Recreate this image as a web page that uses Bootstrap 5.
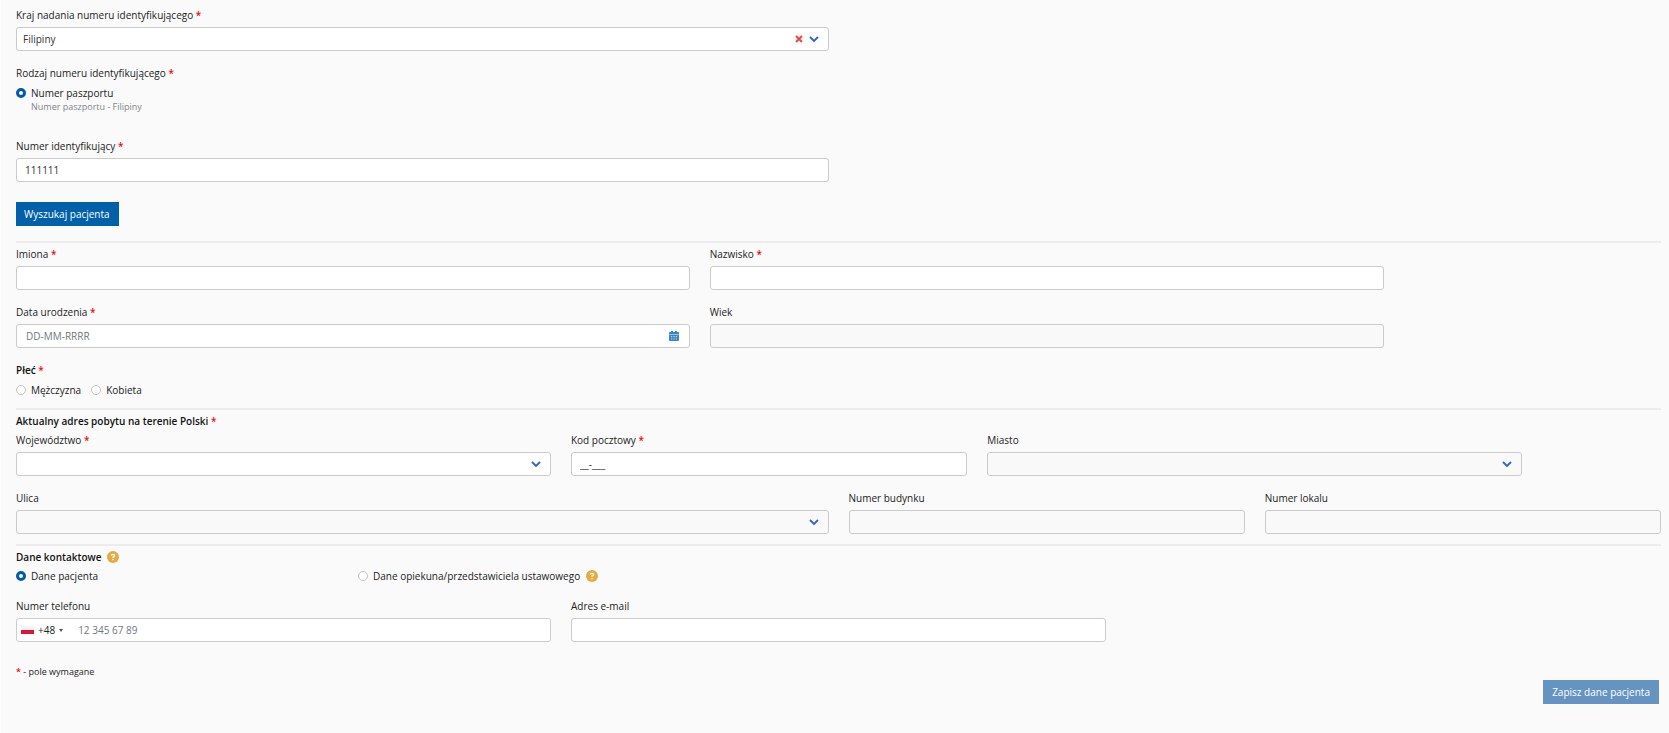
<!DOCTYPE html>
<html lang="pl">
<head>
<meta charset="utf-8">
<meta name="viewport" content="width=device-width, initial-scale=1">
<title>Dane pacjenta</title>
<link href="https://cdn.jsdelivr.net/npm/bootstrap@5.3.0/dist/css/bootstrap.min.css" rel="stylesheet">
<style>
:root{--line:#cbcbcb;--blue:#0060a8}
body{font-family:"Open Sans","Noto Sans",sans-serif;font-size:10px;line-height:16px;color:#222;background:#fafafa;border-left:1px solid #fff;min-height:100vh}
.patient-form{padding:7px 8px 16px 15px}
.patient-form .row{--bs-gutter-x:20px}
.form-label{display:block;margin-bottom:4px;line-height:16px}
.req{color:#f00;font-weight:600}
.form-control,.form-select{height:24px;min-height:24px;padding:0 8px;font-size:10px;line-height:16px;color:#333;border:1px solid var(--line);border-radius:3px;background-color:#fff}
.form-select{padding:0 32px 0 6px;background-image:url("data:image/svg+xml,%3Csvg xmlns='http://www.w3.org/2000/svg' viewBox='0 0 10 10'%3E%3Cpath d='M1 3l4 4 4-4' fill='none' stroke='%232f62cc' stroke-width='1.8'/%3E%3C/svg%3E");background-size:10px 10px;background-position:right 9px center}
.form-control:disabled,.form-select:disabled{background-color:#f9f9f9;opacity:1}
.form-control::placeholder{color:#70777d;opacity:1}
.date-input{padding-left:9px}
.field-icon{position:absolute;top:0;height:24px;border:0;background:none;padding:0;display:flex;align-items:center}
.clear-btn{right:26px}
.cal-btn{right:11px}
.choice{display:flex;align-items:center;gap:5px;line-height:16px}
.choice input{appearance:none;width:10px;height:10px;margin:0;border:1px solid #c4c4c4;border-radius:50%;background:#fff;flex:none}
.choice input:checked{border:3px solid #0059b3}
.hint{font-size:9px;line-height:12px;color:#808689;padding-left:15px;margin-bottom:25px}
.btn-app{font-size:10px;line-height:16px;padding:3px 8px;border:1px solid var(--blue);border-radius:0;color:#fff;background:var(--blue);font-weight:500}
.btn-app:hover{background:#004f8c;color:#fff}
.btn-app:disabled{background:#6594c2;border-color:#6594c2;color:#fff;opacity:1}
.search-btn{margin:20px 0 15px;padding-left:7px}
.divider{height:2px;margin:0 0 3px;border:0;background:#ececec;opacity:1}
.section-title{font-size:10px;line-height:16px;font-weight:600;color:#111;margin:0}
.title-row{margin-bottom:3px}
.help{display:inline-flex;border:0;padding:0;background:none}
.group-gap{margin-bottom:14px}
.sex-row{gap:10px;padding-bottom:10px}
.street-row{padding-bottom:10px}
.with-help{gap:6px}
.source-first{width:342px}
.phone-box{display:flex;height:24px;border:1px solid var(--line);border-radius:3px;background:#fff;align-items:center}
.phone-box .form-control{border:0;height:22px;min-height:22px;padding-left:15px}
.dial{display:flex;align-items:center;gap:4px;border:0;background:none;padding:0 0 0 4px;color:#222;line-height:16px}
.flag{width:13px;height:8px;background:linear-gradient(#f4f4f4 50%,#dc143c 50%)}
.caret-down{border:2px solid transparent;border-top:3px solid #555;border-bottom:0}
.note{font-size:9px;line-height:16px;margin-top:22px}
.actions{padding-right:2px}
</style>
</head>
<body>
<main>
<form class="patient-form">
  <div class="row group-gap">
    <div class="col-6">
      <label class="form-label" for="country">Kraj nadania numeru identyfikującego <span class="req">*</span></label>
      <div class="position-relative">
        <select class="form-select" id="country"><option>Filipiny</option></select>
        <button type="button" class="field-icon clear-btn" aria-label="Wyczyść"><svg width="8" height="8" viewBox="0 0 8 8"><path d="M1 1l6 6M7 1L1 7" stroke="#f04444" stroke-width="2"/></svg></button>
      </div>
    </div>
  </div>

  <div class="form-label">Rodzaj numeru identyfikującego <span class="req">*</span></div>
  <label class="choice"><input type="radio" name="idtype" checked>Numer paszportu</label>
  <div class="hint">Numer paszportu - Filipiny</div>

  <div class="row">
    <div class="col-6">
      <label class="form-label" for="idnum">Numer identyfikujący <span class="req">*</span></label>
      <input class="form-control" id="idnum" value="111111">
    </div>
  </div>
  <button type="button" class="btn btn-app d-block search-btn">Wyszukaj pacjenta</button>

  <hr class="divider">
  <div class="row group-gap">
    <div class="col-5">
      <label class="form-label" for="first">Imiona <span class="req">*</span></label>
      <input class="form-control" id="first">
    </div>
    <div class="col-5">
      <label class="form-label" for="last">Nazwisko <span class="req">*</span></label>
      <input class="form-control" id="last">
    </div>
  </div>
  <div class="row group-gap">
    <div class="col-5">
      <label class="form-label" for="birth">Data urodzenia <span class="req">*</span></label>
      <div class="position-relative">
        <input class="form-control date-input" id="birth" placeholder="DD-MM-RRRR">
        <button type="button" class="field-icon cal-btn" aria-label="Kalendarz"><svg width="10" height="10" viewBox="0 0 10 10"><path d="M1 1h1V0h2v1h2V0h2v1h1q1 0 1 1v1H0V2q0-1 1-1zM0 3.500h10V9q0 1-1 1H1q-1 0-1-1z" fill="#3d83c4"/><path d="M2 5h1.200v1.200H2zM4.400 5h1.200v1.200H4.400zM6.800 5H8v1.200H6.800zM2 7.400h1.200v1.200H2zM4.400 7.400h1.200v1.200H4.400zM6.800 7.400H8v1.200H6.800z" fill="#c5dcf0"/></svg></button>
      </div>
    </div>
    <div class="col-5">
      <label class="form-label" for="age">Wiek</label>
      <input class="form-control" id="age" disabled>
    </div>
  </div>

  <h2 class="section-title mb-1">Płeć <span class="req">*</span></h2>
  <div class="d-flex sex-row">
    <label class="choice"><input type="radio" name="sex">Mężczyzna</label>
    <label class="choice"><input type="radio" name="sex">Kobieta</label>
  </div>

  <hr class="divider">
  <h2 class="section-title title-row">Aktualny adres pobytu na terenie Polski <span class="req">*</span></h2>
  <div class="row group-gap">
    <div class="col-4">
      <label class="form-label" for="region">Województwo <span class="req">*</span></label>
      <select class="form-select" id="region"><option></option></select>
    </div>
    <div class="col-3">
      <label class="form-label" for="zip">Kod pocztowy <span class="req">*</span></label>
      <input class="form-control" id="zip" value="__-___">
    </div>
    <div class="col-4">
      <label class="form-label" for="city">Miasto</label>
      <select class="form-select" id="city" disabled><option></option></select>
    </div>
  </div>
  <div class="row street-row">
    <div class="col-6">
      <label class="form-label" for="street">Ulica</label>
      <select class="form-select" id="street" disabled><option></option></select>
    </div>
    <div class="col-3">
      <label class="form-label" for="house">Numer budynku</label>
      <input class="form-control" id="house" disabled>
    </div>
    <div class="col-3">
      <label class="form-label" for="flat">Numer lokalu</label>
      <input class="form-control" id="flat" disabled>
    </div>
  </div>

  <hr class="divider">
  <div class="d-flex align-items-center with-help title-row">
    <h2 class="section-title">Dane kontaktowe</h2>
    <button type="button" class="help" aria-label="Pomoc"><svg width="12" height="12" viewBox="0 0 12 12"><circle cx="6" cy="6" r="6" fill="#e2ab45"/><path d="M4.400 4.800Q4.500 3.300 6 3.300T7.600 4.700Q7.600 5.600 6 6.200V7M6 8v1.300" fill="none" stroke="#fff" stroke-width="1.300"/></svg></button>
  </div>
  <div class="d-flex align-items-center group-gap">
    <div class="source-first"><label class="choice"><input type="radio" name="contact" checked>Dane pacjenta</label></div>
    <div class="d-flex align-items-center with-help">
      <label class="choice"><input type="radio" name="contact">Dane opiekuna/przedstawiciela ustawowego</label>
      <button type="button" class="help" aria-label="Pomoc"><svg width="12" height="12" viewBox="0 0 12 12"><circle cx="6" cy="6" r="6" fill="#e2ab45"/><path d="M4.400 4.800Q4.500 3.300 6 3.300T7.600 4.700Q7.600 5.600 6 6.200V7M6 8v1.300" fill="none" stroke="#fff" stroke-width="1.300"/></svg></button>
    </div>
  </div>
  <div class="row">
    <div class="col-4">
      <label class="form-label" for="phone">Numer telefonu</label>
      <div class="phone-box">
        <button type="button" class="dial"><span class="flag"></span>+48<span class="caret-down"></span></button>
        <input type="tel" class="form-control" id="phone" placeholder="12 345 67 89">
      </div>
    </div>
    <div class="col-4">
      <label class="form-label" for="mail">Adres e-mail</label>
      <input type="email" class="form-control" id="mail">
    </div>
  </div>
  <div class="note"><span class="req">*</span> - pole wymagane</div>
  <div class="d-flex justify-content-end actions">
    <button type="submit" class="btn btn-app" disabled>Zapisz dane pacjenta</button>
  </div>
</form>
</main>
<script src="https://cdn.jsdelivr.net/npm/bootstrap@5.3.0/dist/js/bootstrap.bundle.min.js"></script>
</body>
</html>
